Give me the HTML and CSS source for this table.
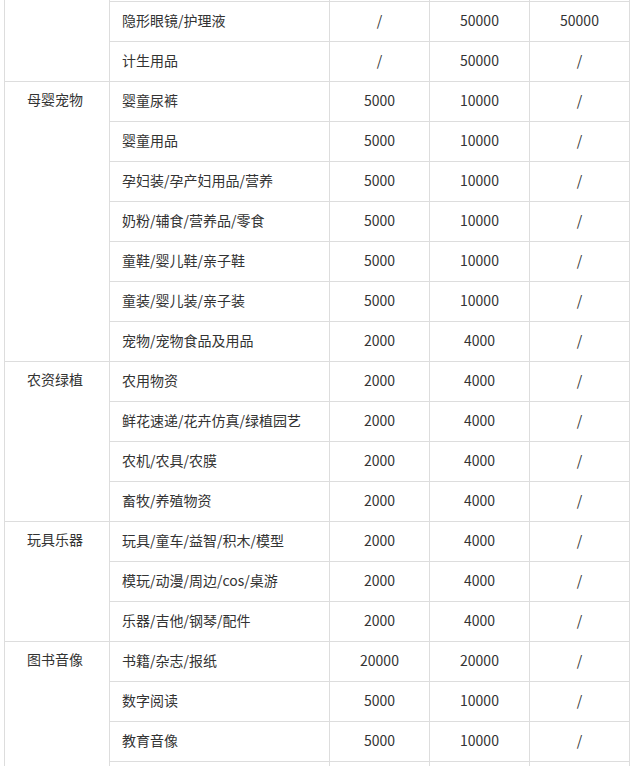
FILE: index.html
```html
<!DOCTYPE html>
<html lang="zh-CN">
<head>
<meta charset="utf-8">
<link rel="stylesheet" href="styles.css">
</head>
<body>
<div class="wrap">
<table class="fee">
<colgroup>
<col class="c-cat"><col class="c-sub"><col class="c-num"><col class="c-num"><col class="c-num">
</colgroup>
<tbody>
<tr><td class="cat" rowspan="3"></td><td></td><td class="num"></td><td class="num"></td><td class="num"></td></tr>
<tr><td>隐形眼镜/护理液</td><td class="num">/</td><td class="num">50000</td><td class="num">50000</td></tr>
<tr><td>计生用品</td><td class="num">/</td><td class="num">50000</td><td class="num">/</td></tr>

<tr><td class="cat" rowspan="7">母婴宠物</td><td>婴童尿裤</td><td class="num">5000</td><td class="num">10000</td><td class="num">/</td></tr>
<tr><td>婴童用品</td><td class="num">5000</td><td class="num">10000</td><td class="num">/</td></tr>
<tr><td>孕妇装/孕产妇用品/营养</td><td class="num">5000</td><td class="num">10000</td><td class="num">/</td></tr>
<tr><td>奶粉/辅食/营养品/零食</td><td class="num">5000</td><td class="num">10000</td><td class="num">/</td></tr>
<tr><td>童鞋/婴儿鞋/亲子鞋</td><td class="num">5000</td><td class="num">10000</td><td class="num">/</td></tr>
<tr><td>童装/婴儿装/亲子装</td><td class="num">5000</td><td class="num">10000</td><td class="num">/</td></tr>
<tr><td>宠物/宠物食品及用品</td><td class="num">2000</td><td class="num">4000</td><td class="num">/</td></tr>

<tr><td class="cat" rowspan="4">农资绿植</td><td>农用物资</td><td class="num">2000</td><td class="num">4000</td><td class="num">/</td></tr>
<tr><td>鲜花速递/花卉仿真/绿植园艺</td><td class="num">2000</td><td class="num">4000</td><td class="num">/</td></tr>
<tr><td>农机/农具/农膜</td><td class="num">2000</td><td class="num">4000</td><td class="num">/</td></tr>
<tr><td>畜牧/养殖物资</td><td class="num">2000</td><td class="num">4000</td><td class="num">/</td></tr>

<tr><td class="cat" rowspan="3">玩具乐器</td><td>玩具/童车/益智/积木/模型</td><td class="num">2000</td><td class="num">4000</td><td class="num">/</td></tr>
<tr><td>模玩/动漫/周边/cos/桌游</td><td class="num">2000</td><td class="num">4000</td><td class="num">/</td></tr>
<tr><td>乐器/吉他/钢琴/配件</td><td class="num">2000</td><td class="num">4000</td><td class="num">/</td></tr>

<tr><td class="cat" rowspan="4">图书音像</td><td>书籍/杂志/报纸</td><td class="num">20000</td><td class="num">20000</td><td class="num">/</td></tr>
<tr><td>数字阅读</td><td class="num">5000</td><td class="num">10000</td><td class="num">/</td></tr>
<tr><td>教育音像</td><td class="num">5000</td><td class="num">10000</td><td class="num">/</td></tr>
<tr><td></td><td class="num"></td><td class="num"></td><td class="num"></td></tr>
</tbody>
</table>
</div>
</body>
</html>
```

FILE: styles.css
```css
html, body {
  margin: 0;
  padding: 0;
  background: #ffffff;
  overflow: hidden;
}
.wrap {
  padding-left: 4px;
  margin-top: -39px;
}
.fee {
  border-collapse: collapse;
  table-layout: fixed;
  width: 626px;
  font-family: "Noto Sans CJK SC", "Microsoft YaHei", sans-serif;
  font-size: 14px;
  color: #333333;
}
.c-cat { width: 105px; }
.c-sub { width: 220px; }
.c-num { width: 100px; }
.fee td {
  border: 1px solid #dddddd;
  height: 36px;
  padding: 0 12px 3px;
  line-height: 20px;
  white-space: nowrap;
  vertical-align: middle;
  text-align: left;
}
.fee td.cat {
  vertical-align: top;
  padding: 7px 10px 0 22px;
}
.fee td.num {
  text-align: center;
  padding: 0 4px 3px;
}
```
